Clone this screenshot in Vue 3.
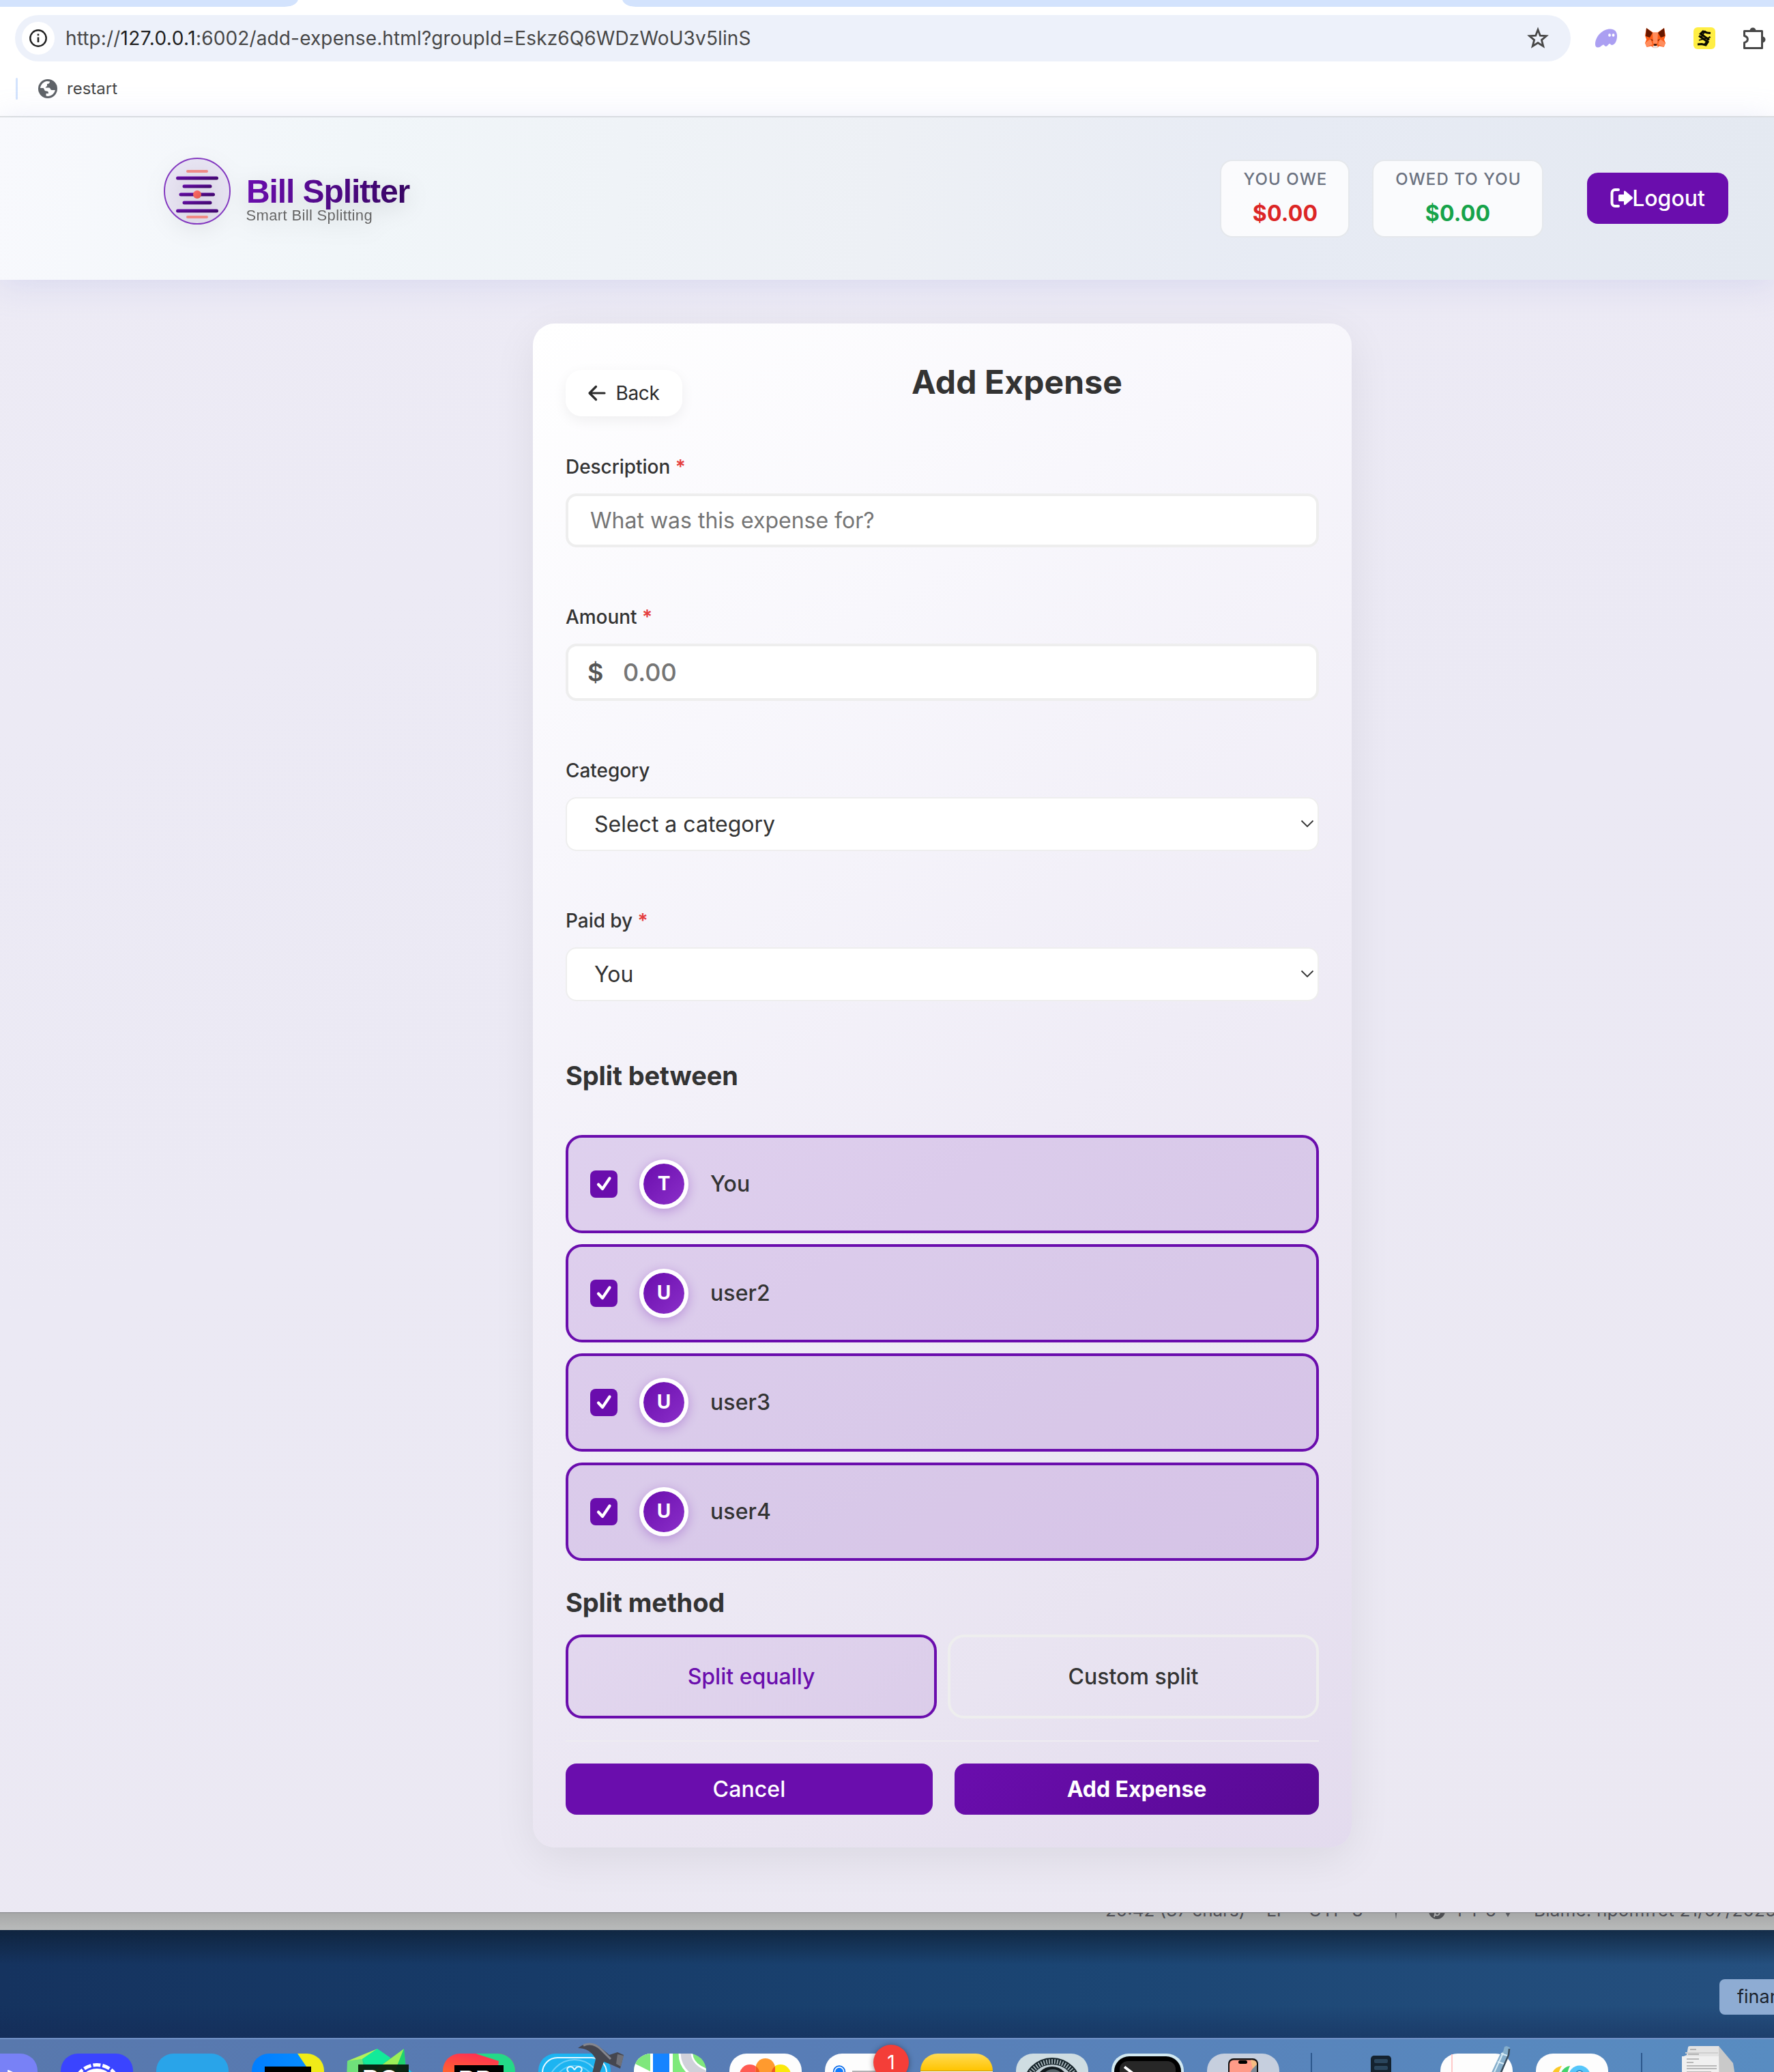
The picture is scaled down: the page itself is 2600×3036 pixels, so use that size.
<script setup>
const members = [
  { name: 'You', initial: 'T' },
  { name: 'user2', initial: 'U' },
  { name: 'user3', initial: 'U' },
  { name: 'user4', initial: 'U' }
]
const stats = [
  { label: 'YOU OWE', value: '$0.00', kind: 'owe' },
  { label: 'OWED TO YOU', value: '$0.00', kind: 'owed' }
]
const ticks = Array.from({ length: 60 }, (_, i) => i * 6)
</script>

<template>
  <div class="desktop">
    <div class="browser">
      <div class="tabs">
        <svg width="2600" height="10" viewBox="0 0 2600 10">
          <path d="M0 0H2600V10H932C921 10 914 6 912 0H437C435 6 428 10 417 10H0Z" fill="#d3e3fd" />
          <path d="M437 0H912C914 6 921 10 932 10H417C428 10 435 6 437 0Z" fill="#fff" />
        </svg>
      </div>
      <div class="toolbar">
        <div class="omnibox">
          <span class="site-info">
            <svg width="28" height="28" viewBox="0 0 28 28" fill="none" stroke="#1f1f1f">
              <circle cx="14" cy="14" r="11.7" stroke-width="2.4" />
              <path d="M14 12.5V20" stroke-width="2.6" />
              <path d="M14 7.6V10.2" stroke-width="2.6" />
            </svg>
          </span>
          <span class="url">http://<b>127.0.0.1</b>:6002/add-expense.html?groupId=Eskz6Q6WDzWoU3v5linS</span>
          <svg class="star" width="32" height="32" viewBox="0 0 32 32">
            <path d="M16 3.5L19.3 12.2L28.3 12.7L21.4 18.6L23.8 27.6L16 22.7L8.2 27.6L10.6 18.6L3.7 12.7L12.7 12.2Z" fill="none" stroke="#474747" stroke-width="2.8" />
          </svg>
        </div>
        <div class="extensions">
          <svg width="34" height="34" viewBox="0 0 34 34">
            <path d="M1 26C1 14 12 3.500 23 3.500C29 3.500 33 7 33 13.500C33 22 29 27 25.500 27C23.500 27 23.300 25 22 25C20.500 25 19 29 16.500 29C14.500 29 14.500 26.500 13 26.500C11 26.500 9 30.500 5 30.500C2 30.500 1 28.500 1 26Z" fill="#ab9ff2" />
            <ellipse cx="22" cy="12.500" rx="1.900" ry="2.300" fill="#fff" /><ellipse cx="27.500" cy="12.500" rx="1.900" ry="2.300" fill="#fff" />
          </svg>
          <svg width="34" height="34" viewBox="0 0 34 34">
            <path d="M4 2L13.500 8.500H20.500L30 2L32 13L30 19L32 24L29.500 30L23 28.500L19.500 31H14.500L11 28.500L4.500 30L2 24L4 19L2 13Z" fill="#ff5c16" />
            <path d="M4 2L13 9L9 16L3 14Z" fill="#661800" /><path d="M30 2L21 9L25 16L31 14Z" fill="#661800" />
            <path d="M13 9H21L20 25H14Z" fill="#ff8d5d" /><path d="M2 24L10 18L13 26L4.500 30Z" fill="#ff8d5d" /><path d="M32 24L24 18L21 26L29.500 30Z" fill="#ff8d5d" />
            <path d="M9 18L13.500 19.500L13 21ZM25 18L20.500 19.500L21 21Z" fill="#661800" />
            <path d="M13 28H21L19.500 31.500H14.500Z" fill="#ead9d3" /><path d="M14.500 25.500H19.500L18.500 28H15.500Z" fill="#24100a" />
          </svg>
          <span class="ext-s"><svg width="32" height="32" viewBox="0 0 32 32" fill="none" stroke="#0b0b00">
            <path d="M25 8.500L20 8L14 6L10.500 9.500L23 18.500" stroke-width="3.200" />
            <path d="M8 12.500L21 21.500L18 26L12 24.500L6 25" stroke-width="3.200" />
            <path d="M17.500 5L11.500 14M24 13.500L15.500 26M8 19L25 14.500" stroke-width="1.800" />
          </svg></span>
          <svg width="34" height="34" viewBox="0 0 34 34">
            <path d="M3.500 6.500H29.500V31.500H3.500V23.500C10 21.500 10 15.500 3.500 13.500Z" fill="none" stroke="#474747" stroke-width="3" stroke-linejoin="round" />
            <path d="M11.500 6A4.500 4.500 0 0 1 20.500 6ZM30 14.500A4.500 4.500 0 0 1 30 23.500Z" fill="#474747" />
          </svg>
        </div>
      </div>
      <div class="bookmarks">
        <i class="bm-sep"></i>
        <svg width="28" height="28" viewBox="0 0 28 28">
          <circle cx="14" cy="14" r="14" fill="#5f6368" />
          <path d="M3 13C3.500 8 8 3.500 13 3L17 3.500C17 6 15.500 7 13 7V9.500C13 11 11 10.800 10.500 12.500H16C18 12.500 17.500 16 20 16H24.800C24 21 19 25 14 25L11.500 24.500V21H15C15 18.500 14.500 17.500 11.500 17.500C9 17.500 9 14.500 7.500 13Z" fill="#fff" />
          <path d="M18 3.500C22 5 25 9 25 14H22C20 14 20.500 11 18 11C16 11 15.500 9 17 8Z" fill="#5f6368" />
        </svg>
        <span>restart</span>
      </div>

      <div class="page">
        <header class="header">
          <svg class="logo" width="400" height="140" viewBox="0 0 400 140">
            <defs>
              <linearGradient id="ink" x1="0" y1="0" x2="1" y2="1"><stop offset="0" stop-color="#6a0dad" /><stop offset="1" stop-color="#380660" /></linearGradient>
              <linearGradient id="word" gradientUnits="userSpaceOnUse" x1="144" y1="50" x2="380" y2="95"><stop offset="0" stop-color="#6a0dad" /><stop offset="1" stop-color="#360561" /></linearGradient>
              <linearGradient id="coral" x1="0" y1="0" x2="1" y2="1"><stop offset="0" stop-color="#ff6b6b" /><stop offset="1" stop-color="#e0584a" /></linearGradient>
            </defs>
            <g class="logo-art">
              <circle cx="69" cy="70" r="48" fill="#6a0dad" fill-opacity=".07" stroke="#843ac0" stroke-width="2" />
              <g fill="url(#ink)">
                <rect x="38" y="48.500" width="62" height="5" rx="2.500" />
                <rect x="47.500" y="60.500" width="43" height="5" rx="2.500" />
                <rect x="42.500" y="72.500" width="52.500" height="5" rx="2.500" />
                <rect x="47.500" y="84.500" width="43" height="5" rx="2.500" />
                <rect x="38" y="96.500" width="62" height="5" rx="2.500" />
              </g>
              <g fill="#ef8a86">
                <rect x="53" y="39" width="32" height="4" rx="2" />
                <rect x="53" y="106" width="32" height="4" rx="2" />
              </g>
              <circle cx="69" cy="75" r="6" fill="url(#coral)" />
              <text x="141" y="87.300" class="brand">Bill Splitter</text>
              <text x="140.500" y="112.700" class="tagline">Smart Bill Splitting</text>
            </g>
          </svg>
          <div class="account">
            <div v-for="s in stats" :key="s.label" class="stat" :class="s.kind">
              <span class="stat-label">{{ s.label }}</span>
              <span class="stat-value">{{ s.value }}</span>
            </div>
            <button class="logout">
              <svg width="34" height="30" viewBox="0 0 34 30">
                <path d="M12 3H7A4.500 4.500 0 0 0 2.500 7.500V22.500A4.500 4.500 0 0 0 7 27H12" fill="none" stroke="#fff" stroke-width="4" stroke-linecap="round" />
                <path d="M12 11.500Q12 10 13.500 10H20V6Q20.200 3.700 22.200 5L32.500 13.800Q33.600 15 32.500 16.200L22.200 25Q20.200 26.300 20 24V20H13.500Q12 20 12 18.500Z" fill="#fff" />
              </svg>Logout
            </button>
          </div>
        </header>

        <main class="card">
          <div class="card-head">
            <button class="back">
              <svg width="26" height="24" viewBox="0 0 26 24" fill="none" stroke="#2b2b2b" stroke-width="3.200" stroke-linecap="round" stroke-linejoin="round"><path d="M24 12H2.500M11.500 2.500L2 12L11.500 21.500" /></svg>
              Back
            </button>
            <h1>Add Expense</h1>
          </div>

          <div class="field">
            <label>Description <em>*</em></label>
            <div class="input">What was this expense for?</div>
          </div>
          <div class="field">
            <label>Amount <em>*</em></label>
            <div class="input amount"><b>$</b>0.00</div>
          </div>
          <div class="field">
            <label>Category</label>
            <div class="select">Select a category
              <svg width="20" height="12" viewBox="0 0 20 12"><path d="M1.500 1.500L10 10L18.500 1.500" fill="none" stroke="#333" stroke-width="1.800" /></svg>
            </div>
          </div>
          <div class="field">
            <label>Paid by <em>*</em></label>
            <div class="select">You
              <svg width="20" height="12" viewBox="0 0 20 12"><path d="M1.500 1.500L10 10L18.500 1.500" fill="none" stroke="#333" stroke-width="1.800" /></svg>
            </div>
          </div>

          <h2 class="between">Split between</h2>
          <div class="members">
            <div v-for="m in members" :key="m.name" class="member">
              <span class="check">
                <svg width="40" height="40" viewBox="0 0 40 40"><path d="M12 20.500L18 27L28.500 11.500" fill="none" stroke="#fff" stroke-width="4.200" stroke-linecap="round" stroke-linejoin="round" /></svg>
              </span>
              <span class="avatar">{{ m.initial }}</span>
              <span class="name">{{ m.name }}</span>
            </div>
          </div>

          <h2 class="method">Split method</h2>
          <div class="methods">
            <button class="option active">Split equally</button>
            <button class="option">Custom split</button>
          </div>
          <div class="actions">
            <button class="cancel">Cancel</button>
            <button class="submit">Add Expense</button>
          </div>
        </main>
      </div>
    </div>

    <div class="statusbar">
      <span class="s1">20:42 (37 chars)</span>
      <span class="s2">LF</span>
      <span class="s3">UTF-8</span>
      <svg class="s4" width="10" height="26" viewBox="0 0 10 26"><path d="M0 9H10L6 18L5 26L4 18Z" fill="#55565c" /></svg>
      <svg class="s5" width="24" height="26" viewBox="0 0 24 26"><circle cx="12" cy="14" r="12" fill="#4d4e52" /><path d="M8 23L11 11Q18 13 15 19Q12 22 10 19" fill="none" stroke="#a8a9aa" stroke-width="2" /></svg>
      <span class="s6">PT 6<svg width="14" height="26" viewBox="0 0 14 26"><path d="M2 14H12L7 23Z" fill="#55565c" /></svg></span>
      <span class="s7">Blame: npomfret 21/07/2025</span>
    </div>

    <div class="wallpaper">
      <div class="tooltip">finance</div>
    </div>

    <div class="dock">
      <div class="app violet">
        <svg width="106" height="106" viewBox="0 0 106 106"><path d="M63 25L90 37L66 48Z" fill="#fff" stroke="#fff" stroke-width="2" stroke-linejoin="round" /></svg>
      </div>
      <div class="app signal">
        <svg width="106" height="106" viewBox="0 0 106 106"><circle cx="53" cy="50" r="33.500" fill="none" stroke="#fff" stroke-width="5" stroke-dasharray="11 3" stroke-dashoffset="2" /><circle cx="53" cy="49" r="27" fill="#fff" /></svg>
      </div>
      <div class="app telegram"></div>
      <div class="app idea">
        <svg width="106" height="106" viewBox="0 0 106 106"><path d="M67 0H106V106H90L80 19Z" fill="#f0eb18" /><path d="M19 19H87V106H19Z" fill="#000" /></svg>
      </div>
      <div class="app plain">
        <svg width="106" height="106" viewBox="0 0 106 106">
          <path d="M0 11L44-7L64 7L83-7L88 40V106H0Z" fill="#20d98b" />
          <path d="M0 11L22 8L30 60H-2Z" fill="#6fe07a" /><path d="M0 11L44-7L22 8Z" fill="#b6f05b" />
          <path d="M44-7L63 6L35 30L22 8Z" fill="#12ea9a" /><path d="M83-7L38 26L60 50L73 18Z" fill="#9cf058" />
          <path d="M83-7L73 18L86 28Z" fill="#1fd36c" /><path d="M90 23L98 30H90Z" fill="#15c9e8" />
          <path d="M16 16H90V106H16Z" fill="#07180a" fill-opacity=".93" /><text x="22" y="52" class="jb">PC</text>
        </svg>
      </div>
      <div class="app rust">
        <svg width="106" height="106" viewBox="0 0 106 106"><path d="M45-1H106V106H70L82 11Z" fill="#24d988" /><path d="M17 17H89V106H17Z" fill="#000" /><text x="23" y="52.500" class="jb">RR</text></svg>
      </div>
      <div class="app xcode">
        <svg width="106" height="106" viewBox="0 0 106 106">
          <g fill="none" stroke="#bfeaff" stroke-width="2"><rect x="6" y="6" width="94" height="120" rx="22" stroke="#e6f8ff" /><circle cx="53" cy="48" r="39" opacity=".5" /><circle cx="53" cy="48" r="30" opacity=".4" /><path d="M53 24Q50 18 45 19.500Q40 22 44 27L58 46M53 24Q56 18 61 19.500Q66 22 62 27L48 46" stroke="#e6f8ff" /></g>
          <path d="M58-8Q76-22 92-8L104 2L116-2L125 2L120 22L104 15L96 12L78 60L72 58L84 8Q76-8 58-8Z" fill="#45464f" /><path d="M66-12Q80-18 92-6L106 8" fill="none" stroke="#85868e" stroke-width="3" />
          <path d="M116 1L125 3L121 19L114 15Z" fill="#6f7078" />
        </svg>
      </div>
      <div class="app maps">
        <svg width="106" height="106" viewBox="0 0 106 106"><path d="M0 0H60V106H0Z" fill="#fff" /><path d="M0 14L24 26V0H0Z" fill="#7fe77c" /><path d="M28 0H52V106H28Z" fill="#1684ff" /><path d="M57 0H67Q66 18 84 34H57Z" fill="#7ee97b" /><path d="M76 0Q76 22 106 33" fill="none" stroke="#fff" stroke-width="21" /><path d="M76-2Q76 22 106 33" fill="none" stroke="#d0d1da" stroke-width="15" /></svg>
      </div>
      <div class="app white">
        <svg width="106" height="106" viewBox="0 0 106 106"><rect x="15" y="16" width="30" height="44" rx="15" fill="#ff5b52" /><rect x="60" y="16" width="30" height="44" rx="15" fill="#fbe80b" /><rect x="38.500" y="7" width="28.500" height="48" rx="14.200" fill="#ff9a2e" /><path d="M39 19Q45 22 45 36H39ZM67 19Q61 22 60.500 36H67Z" fill="#ef5b20" /></svg>
      </div>
      <div class="app white">
        <svg width="106" height="106" viewBox="0 0 106 106"><circle cx="21" cy="26.500" r="8.300" fill="none" stroke="#0a6be8" stroke-width="1.800" /><circle cx="21" cy="26.500" r="5.800" fill="#0f7bff" /><path d="M40 26H96" stroke="#b0b0b3" stroke-width="2" /></svg>
        <span class="badge">1</span>
      </div>
      <div class="app notes"></div>
      <div class="app settings">
        <svg width="106" height="106" viewBox="0 0 106 106"><circle cx="53" cy="49" r="43" fill="#17252b" /><path v-for="a in ticks" :key="a" d="M53 8V15" stroke="#b2c0c6" stroke-width="1.600" :transform="`rotate(${a} 53 49)`" /><circle cx="53" cy="49" r="33" fill="#c1ced4" /><circle cx="53" cy="43" r="24" fill="#10181c" /><circle cx="54" cy="40" r="17" fill="#56656b" /></svg>
      </div>
      <div class="app terminal">
        <svg width="106" height="106" viewBox="0 0 106 106"><rect x="4" y="4" width="98" height="98" rx="22" fill="#000" /><rect x="12" y="11" width="82" height="82" rx="12" fill="#272727" /><path d="M19 19.500L32 29.500L19 39" fill="none" stroke="#fff" stroke-width="4" /></svg>
      </div>
      <div class="app phone">
        <svg width="106" height="106" viewBox="0 0 106 106"><rect x="31" y="7" width="44" height="100" rx="8" fill="#111" /><rect x="33" y="9.500" width="40" height="90" rx="6" fill="#ff9b88" /><path d="M73 14V50H58Q61 24 73 16Z" fill="#7c8996" /><path d="M64 9.500Q73 9 73 16L67 22Z" fill="#f5bd82" /><rect x="46" y="10" width="13" height="5" rx="2.500" fill="#000" /></svg>
      </div>
      <i class="dock-sep first"></i>
      <div class="app plain">
        <svg width="106" height="106" viewBox="0 0 106 106"><rect x="38" y="3" width="30" height="100" rx="5" fill="#14222f" /><rect x="43" y="8" width="20" height="6" rx="2" fill="#2a455c" /><rect x="43" y="18" width="20" height="6" rx="2" fill="#2a455c" /></svg>
      </div>
      <div class="app white">
        <svg width="106" height="106" viewBox="0 0 106 106"><path d="M17 1V60" stroke="#ffc9c9" stroke-width="2" /><path d="M94-10L97-11L102-9L100 2L88 34H72L88 0L92-3Z" fill="#85aecb" /><path d="M101-7L100 2L86 34" stroke="#3a4b5a" stroke-width="2.500" fill="none" /><path d="M92-1L76 34M89 0L98 3M84 12L93 15" stroke="#d8ecf6" stroke-width="2" fill="none" /></svg>
      </div>
      <div class="app white">
        <svg width="106" height="106" viewBox="0 0 106 106"><path d="M22 36Q24 20 38 18Q33 26 32 36Z" fill="#fbc928" /><path d="M35 36Q37 20 50 18Q46 26 45 36Z" fill="#43d36b" /><circle cx="64" cy="33.500" r="16" fill="#56c6fa" /><circle cx="64" cy="30" r="5" fill="#fff" stroke="#2e8bc7" stroke-width="2" /></svg>
      </div>
      <i class="dock-sep second"></i>
      <div class="app plain">
        <svg width="106" height="106" viewBox="0 0 106 106"><path d="M22-9Q22-11 25-11H67L85 18L94 50H13V5L20 2Z" fill="#e3e3e3" /><path d="M67-11L88 14L94 50H68Z" fill="#c9c9c9" /><path d="M13 4H67V50H13Z" fill="#f0f0f0" /><path d="M18-1H66" stroke="#cfcfcf" stroke-width="2" /><path d="M25-6H34M22 1H38M20 8H38M20 13H30M20 18H64M20 22H64M20 27H56" stroke="#a5a5a5" stroke-width="1.500" /></svg>
      </div>
    </div>
  </div>
</template>

<style>
body { margin: 0; }
</style>

<style scoped>
* { box-sizing: border-box; }
.desktop {
  width: 2600px; height: 3036px; overflow: hidden;
  display: flex; flex-direction: column;
  font-family: Inter, "Liberation Sans", sans-serif;
  background: #16365f; color: #333;
}
svg { display: block; flex: none; overflow: visible; }
button { font-family: inherit; border: 0; margin: 0; padding: 0; background: none; color: inherit; display: flex; align-items: center; justify-content: center; }

/* Browser chrome */
.browser { height: 2802px; flex: none; display: flex; flex-direction: column; background: #fff; overflow: hidden; }
.tabs { height: 10px; flex: none; }
.toolbar { height: 92px; flex: none; padding: 12px 14px 12px 22px; display: flex; align-items: center; }
.omnibox { width: 2280px; height: 68px; flex: none; border-radius: 34px; background: #edf1fa; display: flex; align-items: center; padding: 0 32px 0 10px; }
.site-info { width: 48px; height: 48px; border-radius: 50%; background: #fff; display: flex; align-items: center; justify-content: center; }
.url { margin-left: 16px; flex: 1; font-size: 28px; letter-spacing: .13px; color: #474747; white-space: nowrap; }
.url b { font-weight: 400; color: #1f1f1f; letter-spacing: .45px; }
.extensions { display: flex; align-items: center; gap: 38px; margin-left: 35px; }
.ext-s { width: 32px; height: 32px; border-radius: 6px; background: #ffee44; margin: 0 1px; }
.bookmarks { height: 68px; flex: none; display: flex; align-items: center; padding-left: 23px; font-size: 24px; color: #474747; padding-bottom: 12px; }
.bookmarks span { margin: -2px 0 0 14px; }
.bm-sep { width: 3px; height: 32px; background: #d3e3fd; margin-right: 30px; border-radius: 2px; }

/* Page */
.page { flex: 1; border-top: 2px solid #dfe2e1; background: linear-gradient(160deg, #edebf5, #ebe9f4 50%, #ebe8f2); }
.header {
  height: 238px; display: flex; justify-content: space-between; align-items: center;
  padding: 0 67px 0 220px; position: relative;
  background: linear-gradient(100deg, #f8f9fd 0%, #f1f6f9 20%, #edf0f5 50%, #e7ebf4 72%, #e4e9f1 100%);
  box-shadow: 0 6px 44px rgba(170, 176, 228, .3);
}
.logo { margin-top: -22px; }
.logo-art { filter: drop-shadow(0 8px 16px rgba(0, 0, 0, .15)); }
.brand { font: 700 48px "Liberation Sans", Arial, sans-serif; letter-spacing: -1.1px; fill: url(#word); }
.tagline { font: 400 22px "Liberation Sans", Arial, sans-serif; letter-spacing: .35px; fill: #666; }
.account { display: flex; align-items: center; }
.stat { height: 114px; width: 190px; margin-right: 33px; border: 2px solid #e5e8ec; border-radius: 18px; background: rgba(255, 255, 255, .8); display: flex; flex-direction: column; align-items: center; padding-top: 10px; }
.stat.owed { width: 251px; margin-right: 64px; }
.stat-label { font-size: 24px; line-height: 33px; font-weight: 500; letter-spacing: 1.1px; margin-right: -2px; color: #6b7280; }
.stat-value { font-size: 32px; line-height: 40px; margin-top: 14px; font-weight: 650; letter-spacing: .2px; }
.owe .stat-value { color: #dc2626; margin-right: -1px; }
.owed .stat-value { color: #16a34a; }
.logout { width: 207px; height: 75px; margin-top: -1px; border-radius: 16px; background: #6a0dad; color: #fff; font-size: 32px; font-weight: 550; padding-bottom: 1px; }
.logout svg { margin-right: -2px; }

/* Card */
.card {
  width: 1200px; height: 2233px; margin: 64px 0 0 781px; padding: 48px; border-radius: 32px;
  background: linear-gradient(145deg, #fff 0%, #f8f7fc 25%, #efecf6 55%, #e9e4f1 80%, #e3dbee 100%);
  box-shadow: 0 16px 64px rgba(0, 0, 0, .07);
}
.card-head { height: 88px; display: flex; align-items: flex-start; gap: 48px; }
.back { width: 171px; height: 68px; margin-top: 20px; border-radius: 24px; background: rgba(255, 255, 255, .9); box-shadow: 0 6px 20px rgba(0, 0, 0, .06); font-size: 28px; letter-spacing: -.3px; gap: 14px; color: #2b2b2b; }
h1 { flex: 1; margin: 1px 0 0; text-align: center; font-size: 48px; line-height: 74px; font-weight: 700; letter-spacing: .1px; }
.field { margin-top: 82px; }
.card-head + .field { margin-top: 54px; }
label { display: block; height: 40px; line-height: 41px; margin-bottom: 19px; font-size: 28px; font-weight: 550; letter-spacing: -.05px; }
em { font-style: normal; font-weight: 600; color: #e53e3e; }
.input { height: 79px; border: 4px solid #eee; border-radius: 16px; background: #fff; display: flex; align-items: center; padding-left: 32px; font-size: 32px; color: #757575; }
.amount { height: 84px; font-size: 36px; font-weight: 500; padding-left: 28px; }
.amount b { font-weight: 600; color: #555; width: 52px; }
.select { height: 79px; border: 2px solid #eee; border-radius: 16px; background: #fff; display: flex; align-items: center; justify-content: space-between; padding: 0 5px 1px 40px; font-size: 32px; }
h2 { margin: 0; font-size: 38px; line-height: 48px; font-weight: 700; letter-spacing: -.12px; }
.between { margin: 85px 0 63px; }
.members { display: flex; flex-direction: column; gap: 16px; }
.member { height: 144px; border: 4px solid #6a0dad; border-radius: 24px; background: rgba(106, 13, 173, .145); display: flex; align-items: center; padding-left: 32px; }
.check { width: 40px; height: 40px; border-radius: 8px; background: #6a0dad; }
.avatar { width: 72px; height: 72px; margin: 0 32px; border: 6px solid #fff; border-radius: 50%; background: linear-gradient(135deg, #6a0dad, #8b2fc9) padding-box; box-shadow: 0 4px 16px rgba(106, 13, 173, .3); color: #fff; font-size: 28px; font-weight: 700; line-height: 58px; text-align: center; }
.name { font-size: 32px; font-weight: 550; letter-spacing: .1px; margin-top: -1px; }
.method { margin: 37px 0 23px; }
.methods { display: flex; gap: 16px; }
.option { flex: 1; height: 123px; border: 4px solid #eee; border-radius: 24px; font-size: 32px; font-weight: 500; }
.option.active { border-color: #6a0dad; color: #6a0dad; background: linear-gradient(135deg, rgba(106, 13, 173, .08), rgba(106, 13, 173, .11)); }
.actions { margin-top: 32px; border-top: 2px solid #eeecf1; padding-top: 32px; display: flex; gap: 32px; }
.actions button { height: 75px; border-radius: 16px; color: #fff; font-size: 32px; background: #6a0dad; }
.cancel { width: 538px; font-weight: 550; letter-spacing: .1px; }
.submit { width: 534px; font-weight: 650; }
.actions .submit { background: linear-gradient(135deg, #6a0dad, #580a94); letter-spacing: -.05px; }

/* Window behind the browser */
.statusbar { height: 26px; flex: none; border-top: 1px solid #808184; overflow: hidden; background: linear-gradient(#a6a7a7, #b9bbbb); display: flex; padding-left: 1620px; font-size: 26px; line-height: 26px; color: #4b4c53; white-space: nowrap; }
.statusbar > * { margin-top: -17px; flex: none; }
.s1 { width: 236px; }
.s2 { width: 62px; }
.s3 { width: 123px; }
.s4 { margin-right: 43px; }
.s5 { margin-right: 18px; }
.s6 { width: 112px; display: flex; gap: 10px; }
.s7 { letter-spacing: .2px; }

/* Desktop */
.wallpaper {
  height: 158px; flex: none; display: flex; align-items: flex-start; padding: 72px 0 0 2520px;
  background: linear-gradient(rgba(13, 30, 50, .72), rgba(13, 30, 50, 0) 32%, rgba(13, 30, 50, 0) 70%, rgba(18, 36, 80, .4)), linear-gradient(90deg, #15335f, #173b68 30%, #1b4573 60%, #25507f);
}
.tooltip { height: 52px; width: 160px; flex: none; border-radius: 8px; background: #8eacd3; color: #1b232d; font-size: 27px; line-height: 52px; padding-left: 26px; }
.dock { height: 50px; flex: none; border-top: 2px solid #7090c5; background: linear-gradient(90deg, #5878ad, #587db6 45%, #588cc1); display: flex; gap: 34px; padding-top: 21px; }
.app { width: 106px; height: 106px; flex: none; border-radius: 25px; position: relative; overflow: hidden; }
.app.plain, .app.xcode, .app.white { overflow: visible; }
.violet { margin-left: -51px; background: #7881f6; }
.signal { background: #3a44ff; }
.telegram { background: #29a4e9; }
.idea { background: linear-gradient(100deg, #007dff, #0a94ff); }
.rust { background: linear-gradient(10deg, #ff6a2a 60%, #ff2b56 95%); }
.xcode { background: #1cb4f1; }
.maps { background: #7fe77c; }
.white { background: #fdfdfd; }
.notes { background: linear-gradient(#ffdb55, #ffc400 25px, #b99217 25px, #b99217 26px, #fff 26px); }
.settings { background: #cfdde2; }
.terminal { background: #d2e9f1; }
.phone { background: #c6cfde; }
.jb { font: 700 38px Inter, sans-serif; fill: #fff; }
.badge { position: absolute; left: 71px; top: -13px; width: 52px; height: 52px; border-radius: 50%; background: #f43e38; box-shadow: 0 1px 8px rgba(0, 0, 0, .4); color: #fff; font-size: 28px; line-height: 52px; text-align: center; }
.dock-sep { width: 2px; height: 60px; flex: none; background: #2d578c; margin: -1px 14px 0 12px; }
.dock-sep.second { margin: -1px 11px 0 14px; }
</style>
